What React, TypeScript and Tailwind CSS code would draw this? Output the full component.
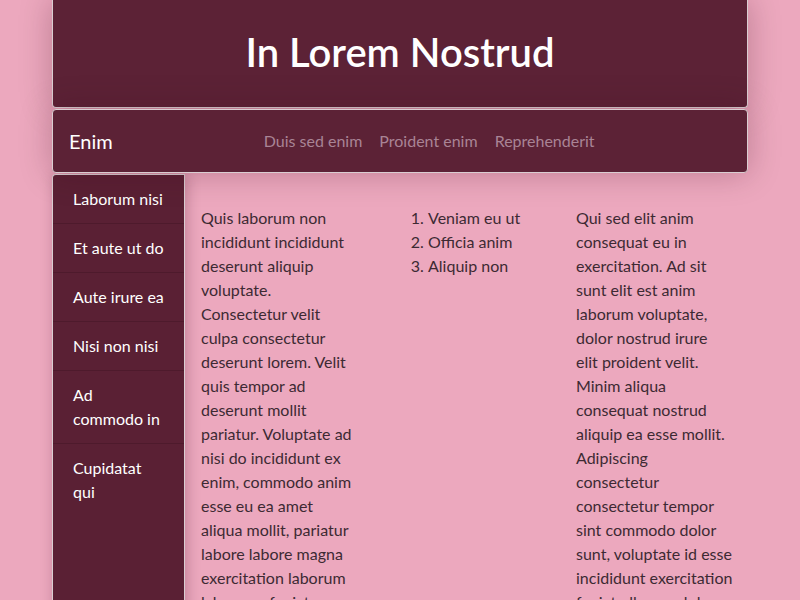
const navLinks = ['Duis sed enim', 'Proident enim', 'Reprehenderit'];
const sideItems = ['Laborum nisi', 'Et aute ut do', 'Aute irure ea', 'Nisi non nisi', 'Ad commodo in', 'Cupidatat qui'];

const colOne =
  'Quis laborum non incididunt incididunt deserunt aliquip voluptate. Consectetur velit culpa consectetur deserunt lorem. Velit quis tempor ad deserunt mollit pariatur. Voluptate ad nisi do incididunt ex enim, commodo anim esse eu ea amet aliqua mollit, pariatur labore labore magna exercitation laborum labore ea fugiat. Cillum dolore.';
const colThree =
  'Qui sed elit anim consequat eu in exercitation. Ad sit sunt elit est anim laborum voluptate, dolor nostrud irure elit proident velit. Minim aliqua consequat nostrud aliquip ea esse mollit. Adipiscing consectetur consectetur tempor sint commodo dolor sunt, voluptate id esse incididunt exercitation fugiat ullamco dolor.';

export default function App() {
  return (
    <div className="min-h-[600px] bg-[#eca8be] font-['Lato',sans-serif]">
      <div className="mx-auto w-[696px]">
        <header className="relative z-10 flex h-[108px] items-center justify-center rounded-b border border-t-0 border-[#d9cdd1] bg-[#5c2236] pb-[3px] shadow-[0_0_32px_rgba(60,10,30,0.28)]">
          <h1 className="text-[40px] font-semibold leading-none text-white">In Lorem Nostrud</h1>
        </header>

        <nav className="relative z-10 mt-[1px] flex h-[64px] items-center rounded border border-[#d9cdd1] bg-[#5c2236] pl-4 shadow-[0_0_32px_rgba(60,10,30,0.28)]">
          <span className="text-[20px] text-white">Enim</span>
          <ul className="ml-[151px] flex gap-[17px] text-base text-[#a98495]">
            {navLinks.map((l) => (
              <li key={l}>{l}</li>
            ))}
          </ul>
        </nav>

        <div className="mt-[1px] flex">
          <aside className="w-[133px] shrink-0 rounded-tl border border-b-0 border-[#d9cdd1] bg-[#5a2034] shadow-[2px_0_14px_rgba(60,10,30,0.25)]">
            <ul className="text-base leading-6 text-white">
              {sideItems.map((s, i) => (
                <li
                  key={s}
                  className={
                    i < sideItems.length - 1 ? 'border-b border-[#4e1a2c] px-5 py-3' : 'px-5 py-3'
                  }
                >
                  {s}
                </li>
              ))}
            </ul>
            <div className="h-[60px]" />
          </aside>

          <main className="grid grid-cols-[156px_149px_156.5px] gap-x-[35px] pl-4 pt-[32px] text-base leading-6 text-[#3d2a33]">
            <p>{colOne}</p>
            <ol className="ml-1 list-decimal pl-8">
              <li>Veniam eu ut</li>
              <li>Officia anim</li>
              <li>Aliquip non</li>
            </ol>
            <p>{colThree}</p>
          </main>
        </div>
      </div>
    </div>
  );
}
